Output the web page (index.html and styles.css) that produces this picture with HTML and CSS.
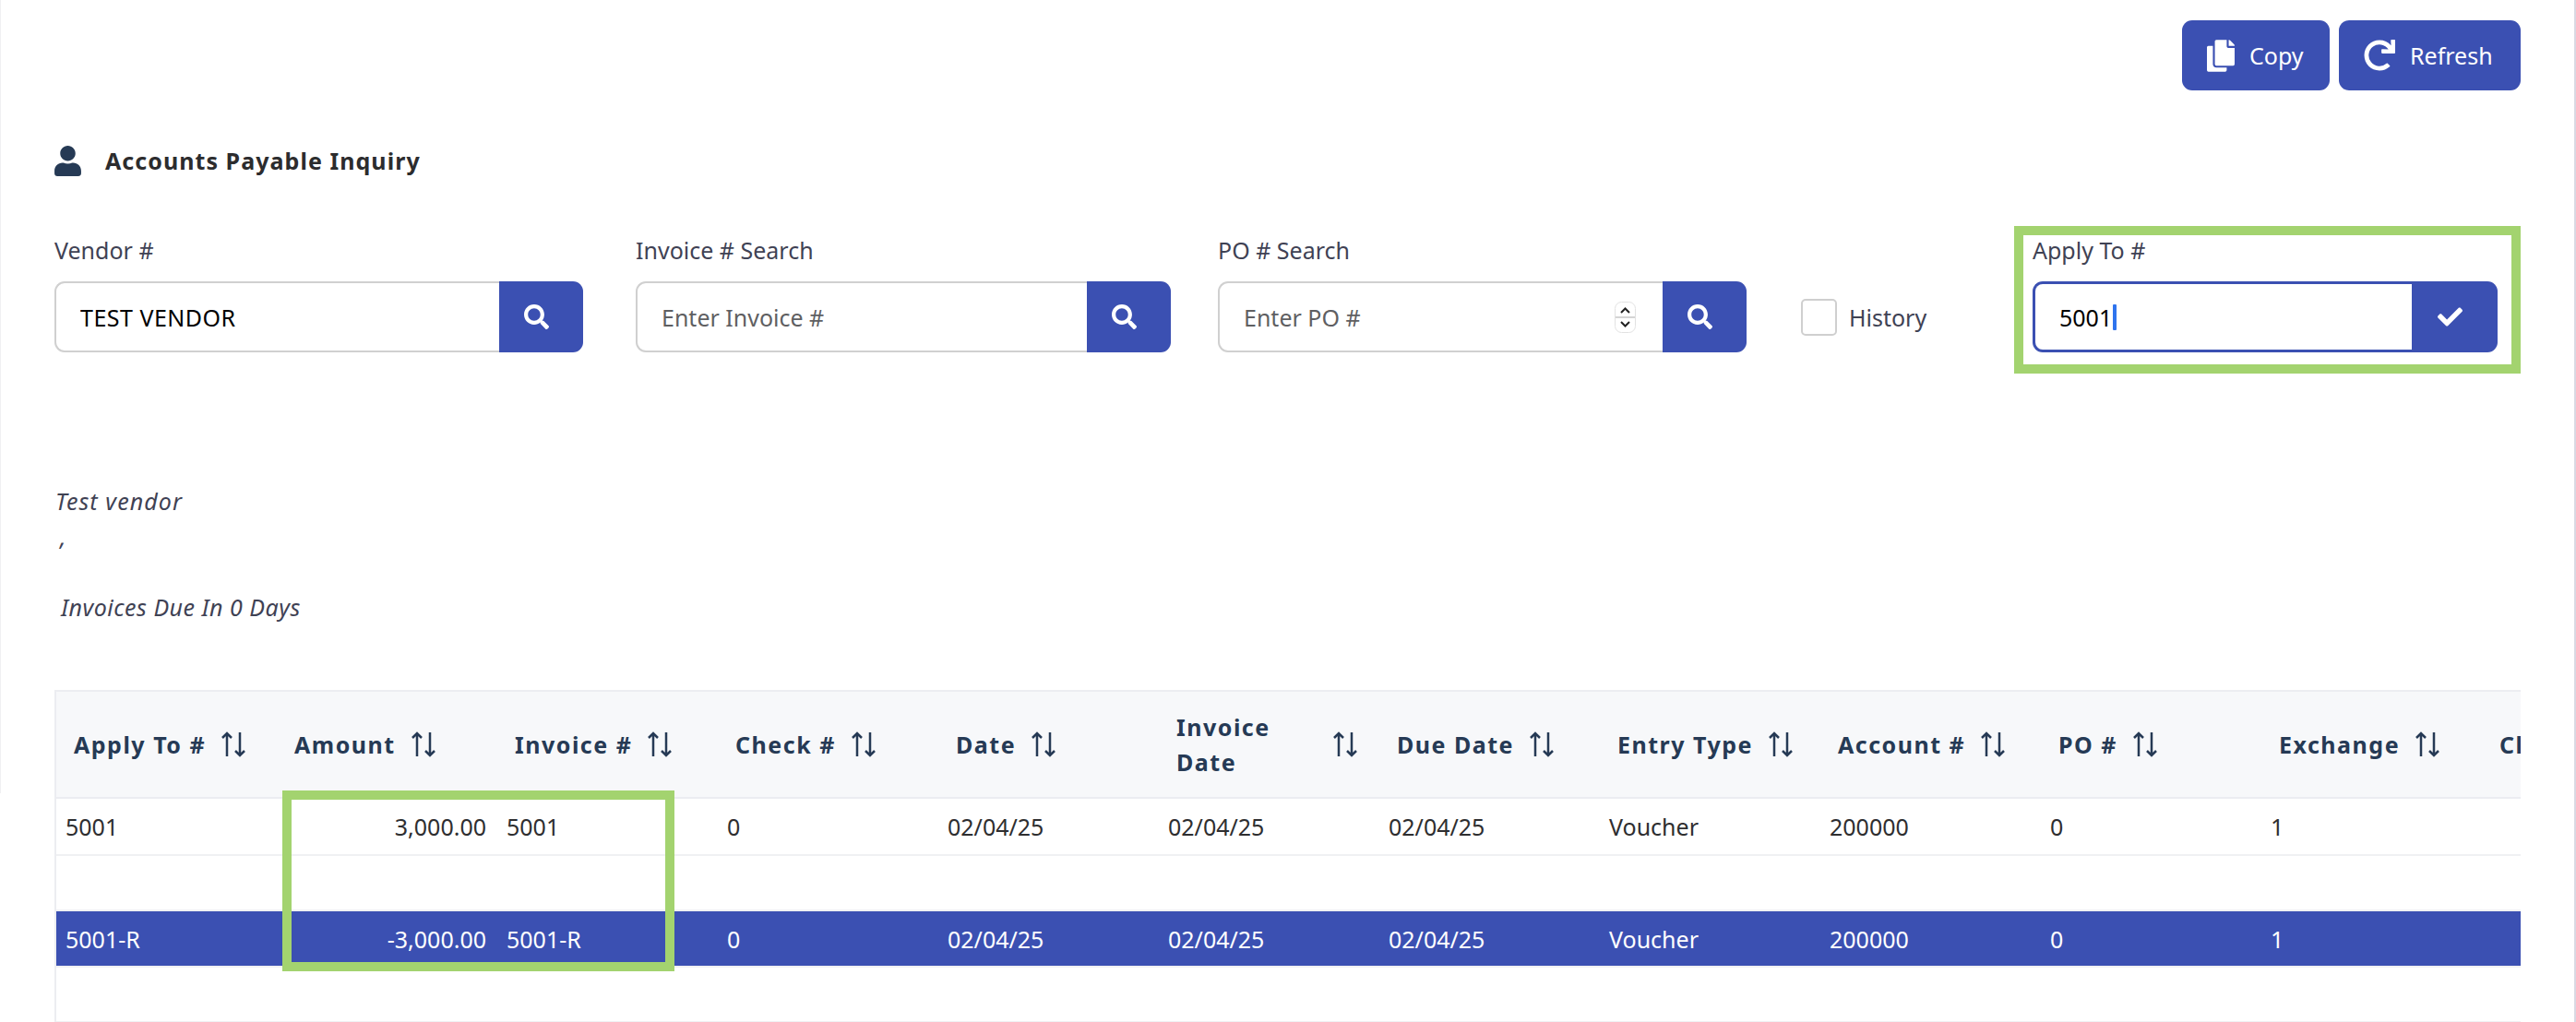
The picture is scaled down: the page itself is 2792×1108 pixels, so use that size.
FILE: index.html
```html
<!DOCTYPE html>
<html lang="en">
<head>
<meta charset="utf-8">
<title>Accounts Payable Inquiry</title>
<link rel="stylesheet" href="styles.css">
</head>
<body>
<svg class="sprite" width="0" height="0" aria-hidden="true">
  <symbol id="i-search" viewBox="0 0 512 512"><path d="M505 442.7L405.3 343c-4.5-4.5-10.6-7-17-7H372c27.6-35.3 44-79.7 44-128C416 93.1 322.9 0 208 0S0 93.1 0 208s93.1 208 208 208c48.3 0 92.7-16.4 128-44v16.3c0 6.4 2.5 12.5 7 17l99.7 99.7c9.4 9.4 24.6 9.4 33.9 0l28.3-28.3c9.4-9.4 9.4-24.6.1-34zM208 336c-70.7 0-128-57.2-128-128 0-70.7 57.2-128 128-128 70.7 0 128 57.2 128 128 0 70.7-57.2 128-128 128z"/></symbol>
  <symbol id="i-sort" viewBox="0 0 27 28"><path class="sort-stroke" d="M7 27V2M2 7L7 2l5 5M21 1v25M16 21l5 5 5-5"/></symbol>
</svg>
<main class="page">
  <div class="toolbar">
    <button class="btn btn-copy" type="button">
      <svg class="btn-icon icon-copy" viewBox="0 0 448 512"><path d="M320 448v40c0 13.255-10.745 24-24 24H24c-13.255 0-24-10.745-24-24V120c0-13.255 10.745-24 24-24h72v296c0 30.879 25.121 56 56 56h168zm0-344V0H152c-13.255 0-24 10.745-24 24v368c0 13.255 10.745 24 24 24h272c13.255 0 24-10.745 24-24V128H344c-13.2 0-24-10.8-24-24zm120.971-31.029L375.029 7.029A24 24 0 0 0 358.059 0H352v96h96v-6.059a24 24 0 0 0-7.029-16.97z"/></svg>
      Copy
    </button>
    <button class="btn btn-refresh" type="button">
      <svg class="btn-icon icon-redo" viewBox="0 0 512 512"><path d="M500.33 0h-47.41a12 12 0 0 0-12 12.57l4 82.76A247.42 247.42 0 0 0 256 8C119.34 8 7.9 119.53 8 256.19 8.1 393.07 119.1 504 256 504a247.1 247.1 0 0 0 166.18-63.91 12 12 0 0 0 .48-17.43l-34-34a12 12 0 0 0-16.38-.55A176 176 0 1 1 402.1 157.8l-101.53-4.87a12 12 0 0 0-12.57 12v47.41a12 12 0 0 0 12 12h200.33a12 12 0 0 0 12-12V12a12 12 0 0 0-12-12z"/></svg>
      Refresh
    </button>
  </div>

  <h1 class="title">
    <svg class="title-icon" viewBox="0 0 448 512"><path d="M224 256c70.7 0 128-57.3 128-128S294.7 0 224 0 96 57.3 96 128s57.3 128 128 128zm89.6 32h-16.7c-22.2 10.2-46.9 16-72.9 16s-50.6-5.8-72.9-16h-16.7C60.2 288 0 348.200 0 422.400V464c0 26.500 21.500 48 48 48h352c26.500 0 48-21.500 48-48v-41.600c0-74.200-60.200-134.400-134.400-134.400z"/></svg>
    Accounts Payable Inquiry
  </h1>

  <section class="filters">
    <div class="field field-vendor">
      <label class="field-label">Vendor #</label>
      <div class="input-group">
        <input class="input input-value" type="text" value="TEST VENDOR">
        <button class="addon" type="button"><svg class="addon-icon"><use href="#i-search"/></svg></button>
      </div>
    </div>
    <div class="field field-invoice">
      <label class="field-label">Invoice # Search</label>
      <div class="input-group">
        <input class="input" type="text" placeholder="Enter Invoice #">
        <button class="addon" type="button"><svg class="addon-icon"><use href="#i-search"/></svg></button>
      </div>
    </div>
    <div class="field field-po">
      <label class="field-label">PO # Search</label>
      <div class="input-group">
        <div class="input-spin">
          <input class="input" type="text" placeholder="Enter PO #">
          <svg class="spinner" viewBox="0 0 23 34"><rect x="0.500" y="0.500" width="22" height="33" rx="7" fill="#fff" stroke="#e2e2e2"/><path d="M1 17h21" stroke="#d4d4d4" stroke-width="2"/><path d="M7 12l4.500-4.500L16 12M7 22l4.500 4.500L16 22" fill="none" stroke="#222" stroke-width="2"/></svg>
        </div>
        <button class="addon" type="button"><svg class="addon-icon"><use href="#i-search"/></svg></button>
      </div>
    </div>
    <label class="history"><span class="checkbox"></span>History</label>
    <div class="field field-apply">
      <label class="field-label">Apply To #</label>
      <div class="input-group">
        <div class="input input-focus"><span>5001</span><span class="caret"></span></div>
        <button class="addon" type="button"><svg class="addon-icon icon-check" viewBox="0 0 512 512"><path d="M173.898 439.404l-166.400-166.400c-9.997-9.997-9.997-26.206 0-36.204l36.203-36.204c9.997-9.998 26.207-9.998 36.204 0L192 312.690 432.095 72.596c9.997-9.997 26.207-9.997 36.204 0l36.203 36.204c9.997 9.997 9.997 26.206 0 36.204l-294.400 294.401c-9.998 9.997-26.207 9.997-36.204-.001z"/></svg></button>
      </div>
    </div>
    <div class="callout callout-apply"></div>
  </section>

  <section class="info">
    <p class="info-line info-name">Test vendor</p>
    <p class="info-line info-comma">,</p>
    <p class="info-line info-due">Invoices Due In 0 Days</p>
  </section>

  <section class="table-wrap">
    <table class="grid">
      <thead>
        <tr>
          <th><div class="th"><span>Apply To #</span><svg class="sort"><use href="#i-sort"/></svg></div></th>
          <th><div class="th"><span>Amount</span><svg class="sort"><use href="#i-sort"/></svg></div></th>
          <th><div class="th"><span>Invoice #</span><svg class="sort"><use href="#i-sort"/></svg></div></th>
          <th><div class="th"><span>Check #</span><svg class="sort"><use href="#i-sort"/></svg></div></th>
          <th><div class="th"><span>Date</span><svg class="sort"><use href="#i-sort"/></svg></div></th>
          <th><div class="th"><span class="th-wrap">Invoice<br>Date</span><svg class="sort"><use href="#i-sort"/></svg></div></th>
          <th><div class="th"><span>Due Date</span><svg class="sort"><use href="#i-sort"/></svg></div></th>
          <th><div class="th"><span>Entry Type</span><svg class="sort"><use href="#i-sort"/></svg></div></th>
          <th><div class="th"><span>Account #</span><svg class="sort"><use href="#i-sort"/></svg></div></th>
          <th><div class="th"><span>PO #</span><svg class="sort"><use href="#i-sort"/></svg></div></th>
          <th><div class="th"><span>Exchange</span><svg class="sort"><use href="#i-sort"/></svg></div></th>
          <th><div class="th"><span>Cleared</span><svg class="sort"><use href="#i-sort"/></svg></div></th>
        </tr>
      </thead>
      <tbody>
        <tr class="row-first">
          <td>5001</td><td class="num">3,000.00</td><td>5001</td><td>0</td><td>02/04/25</td><td>02/04/25</td><td>02/04/25</td><td>Voucher</td><td>200000</td><td>0</td><td>1</td><td></td>
        </tr>
        <tr class="blank"><td colspan="12"></td></tr>
        <tr class="selected">
          <td>5001-R</td><td class="num">-3,000.00</td><td>5001-R</td><td>0</td><td>02/04/25</td><td>02/04/25</td><td>02/04/25</td><td>Voucher</td><td>200000</td><td>0</td><td>1</td><td></td>
        </tr>
        <tr class="blank"><td colspan="12"></td></tr>
      </tbody>
    </table>
    <div class="callout callout-table"></div>
  </section>
</main>
</body>
</html>
```

FILE: styles.css
```css
* { box-sizing: border-box; }

html, body {
  margin: 0;
  height: 1108px;
  overflow: hidden;
  background: #fff;
}

body {
  font-family: "Noto Sans", "Open Sans", sans-serif;
  font-size: 25px;
  color: #3f4254;
  border-right: 2px solid #d9d9e3;
}

.sprite { position: absolute; }

.page {
  position: relative;
  height: 1108px;
  padding: 22px 58px 0 59px;
}

.page::before {
  content: "";
  position: absolute;
  left: 0;
  top: 0;
  width: 1px;
  height: 860px;
  background: #f0f0f2;
}

/* Toolbar */
.toolbar {
  display: flex;
  justify-content: flex-end;
  gap: 10px;
}

.btn {
  display: flex;
  align-items: center;
  height: 76px;
  border: 0;
  border-radius: 11px;
  background: #3b50b2;
  color: #fff;
  font: inherit;
}

.btn-copy { width: 160px; padding: 0 0 0 27px; gap: 16px; }
.btn-refresh { width: 197px; padding: 0 0 0 27px; gap: 16px; }

.btn-icon { fill: #fff; display: block; flex: none; }
.icon-copy { width: 30px; height: 35px; }
.icon-redo { width: 34px; height: 34px; }

/* Title */
.title {
  display: flex;
  align-items: center;
  gap: 26px;
  height: 33px;
  margin: 60px 0 0;
  font-size: 25px;
  font-weight: 700;
  letter-spacing: 1.05px;
  line-height: 33px;
  color: #2c2c2e;
}

.title-icon { width: 29px; height: 33px; fill: #263a55; flex: none; }

/* Filters */
.filters {
  position: relative;
  display: flex;
  align-items: flex-end;
  margin-top: 63px;
}

.field-label {
  display: block;
  height: 34px;
  margin-bottom: 17px;
  line-height: 34px;
}

.field-vendor { width: 573px; }
.field-invoice { width: 580px; margin-left: 57px; }
.field-po { width: 573px; margin-left: 51px; }
.field-apply { width: 504px; margin-left: 58px; }

.input-group { display: flex; height: 77px; }

.input {
  flex: 1;
  min-width: 0;
  width: 100%;
  height: 77px;
  padding: 0 26px;
  border: 2px solid #d0d0d0;
  border-right: 0;
  border-radius: 11px 0 0 11px;
  background: #fff;
  color: #000;
  font: inherit;
  outline: none;
}

.input::placeholder { color: #5f5f62; opacity: 1; }

.input-value { letter-spacing: 0.5px; }

.input-focus {
  display: flex;
  align-items: center;
  padding-left: 26px;
  border: 3px solid #3b50b2;
  border-right: 0;
}

.caret {
  width: 4px;
  height: 28px;
  margin-left: 1px;
  border-radius: 1px;
  background: #2f74ee;
}

.input-spin { position: relative; flex: 1; min-width: 0; }

.spinner {
  position: absolute;
  top: 22px;
  right: 29px;
  width: 23px;
  height: 34px;
}

.addon {
  display: flex;
  align-items: center;
  justify-content: center;
  flex: none;
  width: 91px;
  padding: 0 11px 0 0;
  border: 0;
  border-radius: 0 11px 11px 0;
  background: #3b50b2;
}

.field-apply .addon { width: 93px; }

.addon-icon { width: 27px; height: 27px; fill: #fff; display: block; }
.icon-check { width: 27px; height: 27px; }

.history {
  display: flex;
  align-items: center;
  gap: 13px;
  height: 77px;
  margin-left: 59px;
  width: 193px;
}

.checkbox {
  width: 39px;
  height: 40px;
  border: 2px solid #cfcfcf;
  border-radius: 5px;
  background: #fff;
}

/* Annotation frames */
.callout {
  position: absolute;
  border: 10px solid #a3d36f;
  pointer-events: none;
}

.callout-apply {
  left: 2124px;
  top: -9px;
  width: 549px;
  height: 160px;
}

.callout-table {
  left: 245px;
  top: 107px;
  width: 425px;
  height: 196px;
}

/* Info block */
.info {
  margin-top: 144px;
  font-style: italic;
  letter-spacing: 0.5px;
}

.info-line {
  height: 38.500px;
  margin: 0;
  line-height: 34px;
}

.info-name { padding-left: 1px; letter-spacing: 1.1px; }
.info-comma { padding-left: 6px; }

.info-due {
  margin-top: 37.500px;
  padding-left: 7px;
}

/* Table */
.table-wrap {
  position: relative;
  height: 360px;
  margin-top: 69px;
  border-top: 2px solid #ecedf1;
  border-left: 2px solid #ecedf1;
  overflow: hidden;
}

.grid {
  width: 2868px;
  table-layout: fixed;
  border-collapse: separate;
  border-spacing: 0;
}

.grid th {
  height: 116px;
  padding: 0 0 0 19px;
  background: #f7f8fa;
  border-bottom: 2px solid #ecedf1;
  color: #263a55;
  font-weight: 700;
  letter-spacing: 1.5px;
  text-align: left;
}

.th {
  display: flex;
  align-items: center;
  gap: 16px;
  line-height: 38px;
}

.th-wrap { width: 153px; }

.sort { width: 27px; height: 28px; flex: none; }
.sort-stroke { fill: none; stroke: #263a55; stroke-width: 2.500; }

.grid td {
  height: 60px;
  padding: 0 10px;
  border-bottom: 2px solid #f0f1f3;
  color: #2e2e30;
  white-space: nowrap;
}

.grid .row-first td { height: 62px; }
.grid .selected td { height: 61px; }

.grid td.num { padding-right: 12px; text-align: right; }

.grid .selected td {
  background: #3b50b2;
  color: #fff;
}
```
